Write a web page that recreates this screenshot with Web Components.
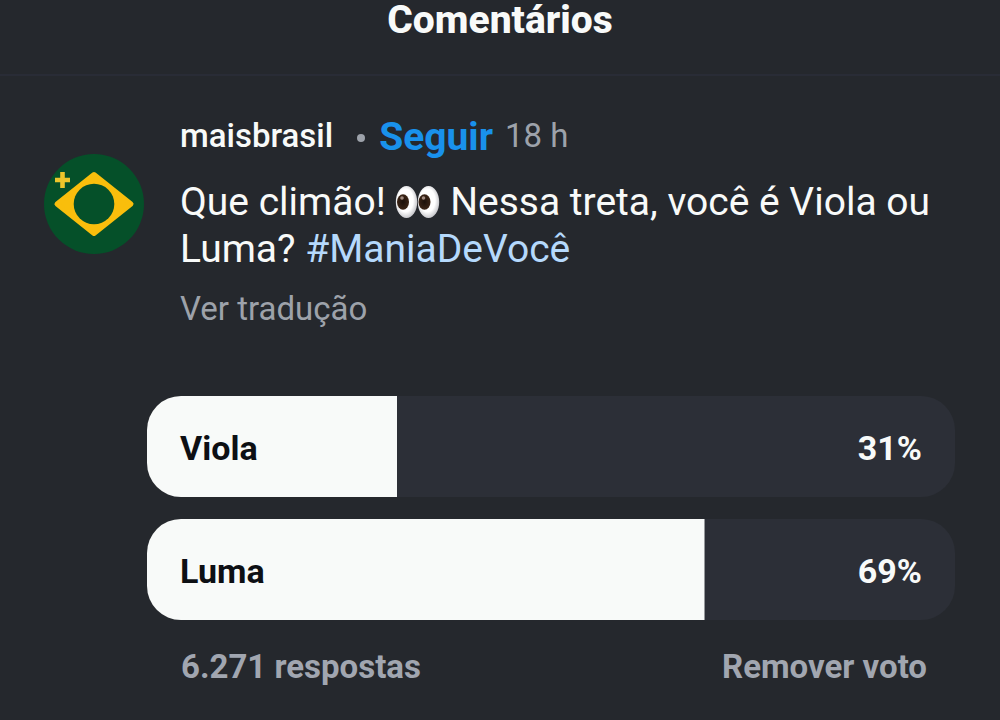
<!DOCTYPE html>
<html lang="pt-BR">
<head>
<meta charset="utf-8">
<meta name="viewport" content="width=device-width, initial-scale=1">
<title>Comentários</title>
<style>
  body { margin: 0; min-height: 100vh; background: #25282d; color: #f8faf9; font-family: Roboto, "Noto Sans", sans-serif; font-size: 33px; }
</style>
</head>
<body>
<comments-header>Comentários</comments-header>
<main>
  <comment-post user="maisbrasil" time="18 h">
    <brasil-avatar slot="avatar"></brasil-avatar>
    Que climão! <eyes-emoji></eyes-emoji> Nessa treta, você é Viola ou Luma? <hash-tag name="ManiaDeVocê"></hash-tag>
    <vote-poll slot="poll" total="6.271 respostas">
      <poll-option label="Viola" value="31"></poll-option>
      <poll-option label="Luma" value="69"></poll-option>
    </vote-poll>
  </comment-post>
</main>
<script>
const define = (name, render) => customElements.define(name, class extends HTMLElement {
  constructor() { super(); this.attachShadow({ mode: "open" }); }
  connectedCallback() { this.shadowRoot.innerHTML = render(this); }
});

define("comments-header", () => `
  <style>
    :host { display: block; border-bottom: 2px solid #292c36; padding-bottom: 34px; }
    h1 { margin: 0; text-align: center; font-size: 39px; line-height: 40px; font-weight: 800; }
  </style>
  <header><h1><slot></slot></h1></header>`);

define("comment-post", el => `
  <style>
    :host { display: block; padding: 36px 45px 32px 44px; }
    .post { display: grid; grid-template-columns: 100px 1fr; column-gap: 36px; }
    .avatar { padding-top: 42px; }
    .meta { display: flex; align-items: center; height: 46px; }
    .user { font-weight: 500; }
    .dot { width: 8px; height: 8px; border-radius: 50%; background: #9da2aa; margin: 6px 14px 0 24px; }
    button { all: unset; cursor: pointer; color: #1991ec; }
    .follow { font-size: 39px; font-weight: 700; padding-top: 4px; }
    time { color: #9da2aa; margin-left: 12px; }
    p { margin: 21px 0 0; font-size: 39px; line-height: 47px; }
    .translate { display: block; margin-top: 14px; line-height: 44px; color: #9da2aa; }
    .poll { margin: 65px 0 0 103px; }
  </style>
  <article>
    <div class="post">
      <div class="avatar"><slot name="avatar"></slot></div>
      <div>
        <div class="meta"><span class="user">${el.getAttribute("user")}</span><span class="dot"></span><button class="follow">Seguir</button><time>${el.getAttribute("time")}</time></div>
        <p><slot></slot></p>
        <button class="translate">Ver tradução</button>
      </div>
    </div>
    <div class="poll"><slot name="poll"></slot></div>
  </article>`);

define("brasil-avatar", () => `
  <style>:host { display: block; } svg { display: block; width: 100px; height: 100px; }</style>
  <svg viewBox="0 0 100 100" role="img" aria-label="Mais Brasil">
    <circle cx="50" cy="50" r="50" fill="#055029"/>
    <path d="M50 20.500 L87 50 L50 79.500 L13 50Z" fill="#f9be0c" stroke="#f9be0c" stroke-width="5" stroke-linejoin="round"/>
    <circle cx="50" cy="50" r="20.300" fill="#055029"/>
    <path d="M18.500 18v16M11 26h15" stroke="#edc52b" stroke-width="4.600" fill="none"/>
  </svg>`);

define("eyes-emoji", () => `
  <style>:host { display: inline-block; vertical-align: -4px; } svg { display: block; width: 45px; height: 34px; }</style>
  <svg viewBox="0 0 45 34" role="img" aria-label="Olhos">
    <defs><radialGradient id="w" cx=".45" cy=".45" r=".55"><stop offset=".65" stop-color="#fff"/><stop offset="1" stop-color="#c9c9cd"/></radialGradient>
    <radialGradient id="p"><stop offset="0" stop-color="#1d110a"/><stop offset="1" stop-color="#3b2415"/></radialGradient></defs>
    <ellipse cx="11.500" cy="17" rx="10.700" ry="16" fill="url(#w)"/>
    <ellipse cx="33.500" cy="17" rx="10.700" ry="16" fill="url(#w)"/>
    <ellipse cx="8" cy="17" rx="6" ry="7.700" fill="url(#p)"/>
    <ellipse cx="29.500" cy="17" rx="6" ry="7.700" fill="url(#p)"/>
    <circle cx="7" cy="13" r="1.800" fill="#a18b80"/>
    <circle cx="28.500" cy="13" r="1.800" fill="#a18b80"/>
  </svg>`);

define("hash-tag", el => `
  <style>:host { display: inline; } a { color: #b5d9fc; text-decoration: none; }</style>
  <a href="#${el.getAttribute("name")}">#${el.getAttribute("name")}</a>`);

define("vote-poll", el => `
  <style>
    :host { display: block; font-weight: 700; }
    .options { display: grid; gap: 22px; }
    footer { display: flex; justify-content: space-between; margin-top: 25px; padding: 0 28px 0 34px; line-height: 44px; color: #a1a6b0; }
    button { all: unset; cursor: pointer; }
  </style>
  <section aria-label="Enquete">
    <div class="options"><slot></slot></div>
    <footer><span>${el.getAttribute("total")}</span><button>Remover voto</button></footer>
  </section>`);

define("poll-option", el => `
  <style>
    :host { display: block; font-size: 34px; }
    button { all: unset; cursor: pointer; box-sizing: border-box; display: flex; justify-content: space-between; align-items: center; width: 100%; height: 101px; padding: 3px 33px 0; border-radius: 34px;
      background: linear-gradient(#f8faf9, #f8faf9) 0 0 / ${el.getAttribute("value")}% 100% no-repeat #2c2f37; }
    .label { color: #0d0f14; }
  </style>
  <button><span class="label">${el.getAttribute("label")}</span><span>${el.getAttribute("value")}%</span></button>`);
</script>
</body>
</html>
